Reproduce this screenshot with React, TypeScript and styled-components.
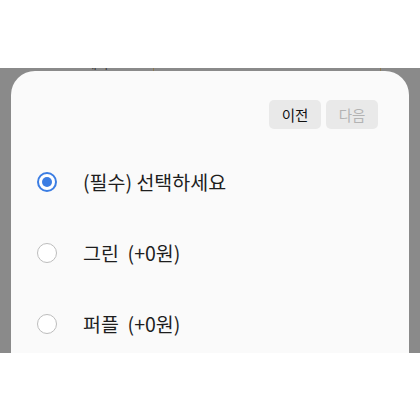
import React, { useState } from "react";
import styled, { createGlobalStyle } from "styled-components";

const GlobalStyle = createGlobalStyle`
  html, body {
    margin: 0;
    padding: 0;
    background: #ffffff;
  }
  body {
    font-family: "Noto Sans CJK KR", "Noto Sans", Roboto, sans-serif;
  }
`;

const options = [
  { id: 0, label: "(필수) 선택하세요" },
  { id: 1, label: "그린  (+0원)" },
  { id: 2, label: "퍼플  (+0원)" },
];

export default function App() {
  const [selected, setSelected] = useState(0);

  return (
    <>
      <GlobalStyle />
      <Page>
        <TopArea />
        <Backdrop>
          <BehindStrip>
            <BehindText>예약</BehindText>
            <BehindLine $left={153} />
            <BehindLine $left={380} />
          </BehindStrip>
          <Sheet>
            <Toolbar>
              <NavButton>이전</NavButton>
              <NavButton disabled>다음</NavButton>
            </Toolbar>
            <OptionList>
              {options.map((item) => (
                <OptionRow key={item.id} onClick={() => setSelected(item.id)}>
                  <Radio $checked={selected === item.id} />
                  <OptionLabel>{item.label}</OptionLabel>
                </OptionRow>
              ))}
            </OptionList>
          </Sheet>
        </Backdrop>
        <BottomArea />
      </Page>
    </>
  );
}

const Page = styled.div`
  width: 420px;
  height: 420px;
  display: flex;
  flex-direction: column;
  overflow: hidden;
`;
const TopArea = styled.div`
  height: 68px;
  background: #ffffff;
`;
const Backdrop = styled.div`
  height: 285px;
  background: #8a8a8a;
  display: flex;
  flex-direction: column;
  overflow: hidden;
`;
const BehindStrip = styled.div`
  position: relative;
  height: 3px;
  overflow: hidden;
  flex-shrink: 0;
`;
const BehindText = styled.span`
  position: absolute;
  left: 85px;
  top: -13px;
  font-size: 13px;
  line-height: 16px;
  color: #3c3c3c;
`;
const BehindLine = styled.span<{ $left: number }>`
  position: absolute;
  top: 0;
  left: ${(p) => p.$left}px;
  width: 1px;
  height: 3px;
  background: #8c7a55;
`;
const Sheet = styled.div`
  flex: 1;
  margin: 0 11px;
  background: #fafafa;
  border-radius: 24px 24px 0 0;
  padding: 29px 31px 0 26px;
  display: flex;
  flex-direction: column;
`;
const Toolbar = styled.div`
  display: flex;
  justify-content: flex-end;
  gap: 5px;
`;
const NavButton = styled.button`
  width: 52px;
  height: 29px;
  border: none;
  border-radius: 5px;
  background: #e9e9e9;
  font-family: inherit;
  font-size: 14.5px;
  font-weight: 400;
  color: #111111;
  padding: 0;
  cursor: pointer;

  &:disabled {
    color: #b3b3b3;
    cursor: default;
  }
`;
const OptionList = styled.ul`
  list-style: none;
  margin: 17px 0 0;
  padding: 0;
`;
const OptionRow = styled.li`
  height: 71px;
  display: flex;
  align-items: center;
  gap: 26px;
  cursor: pointer;
`;
const Radio = styled.span<{ $checked: boolean }>`
  width: 20px;
  height: 20px;
  box-sizing: border-box;
  border-radius: 50%;
  border: ${(p) => (p.$checked ? "2px solid #3b7de3" : "1.5px solid #bdbdbd")};
  background: #ffffff;
  display: flex;
  align-items: center;
  justify-content: center;

  &::after {
    content: "";
    width: 10px;
    height: 10px;
    border-radius: 50%;
    background: ${(p) => (p.$checked ? "#3b7de3" : "transparent")};
  }
`;
const OptionLabel = styled.span`
  font-size: 19.5px;
  color: #1e1e1e;
  white-space: pre;
`;
const BottomArea = styled.div`
  flex: 1;
  background: #ffffff;
`;
